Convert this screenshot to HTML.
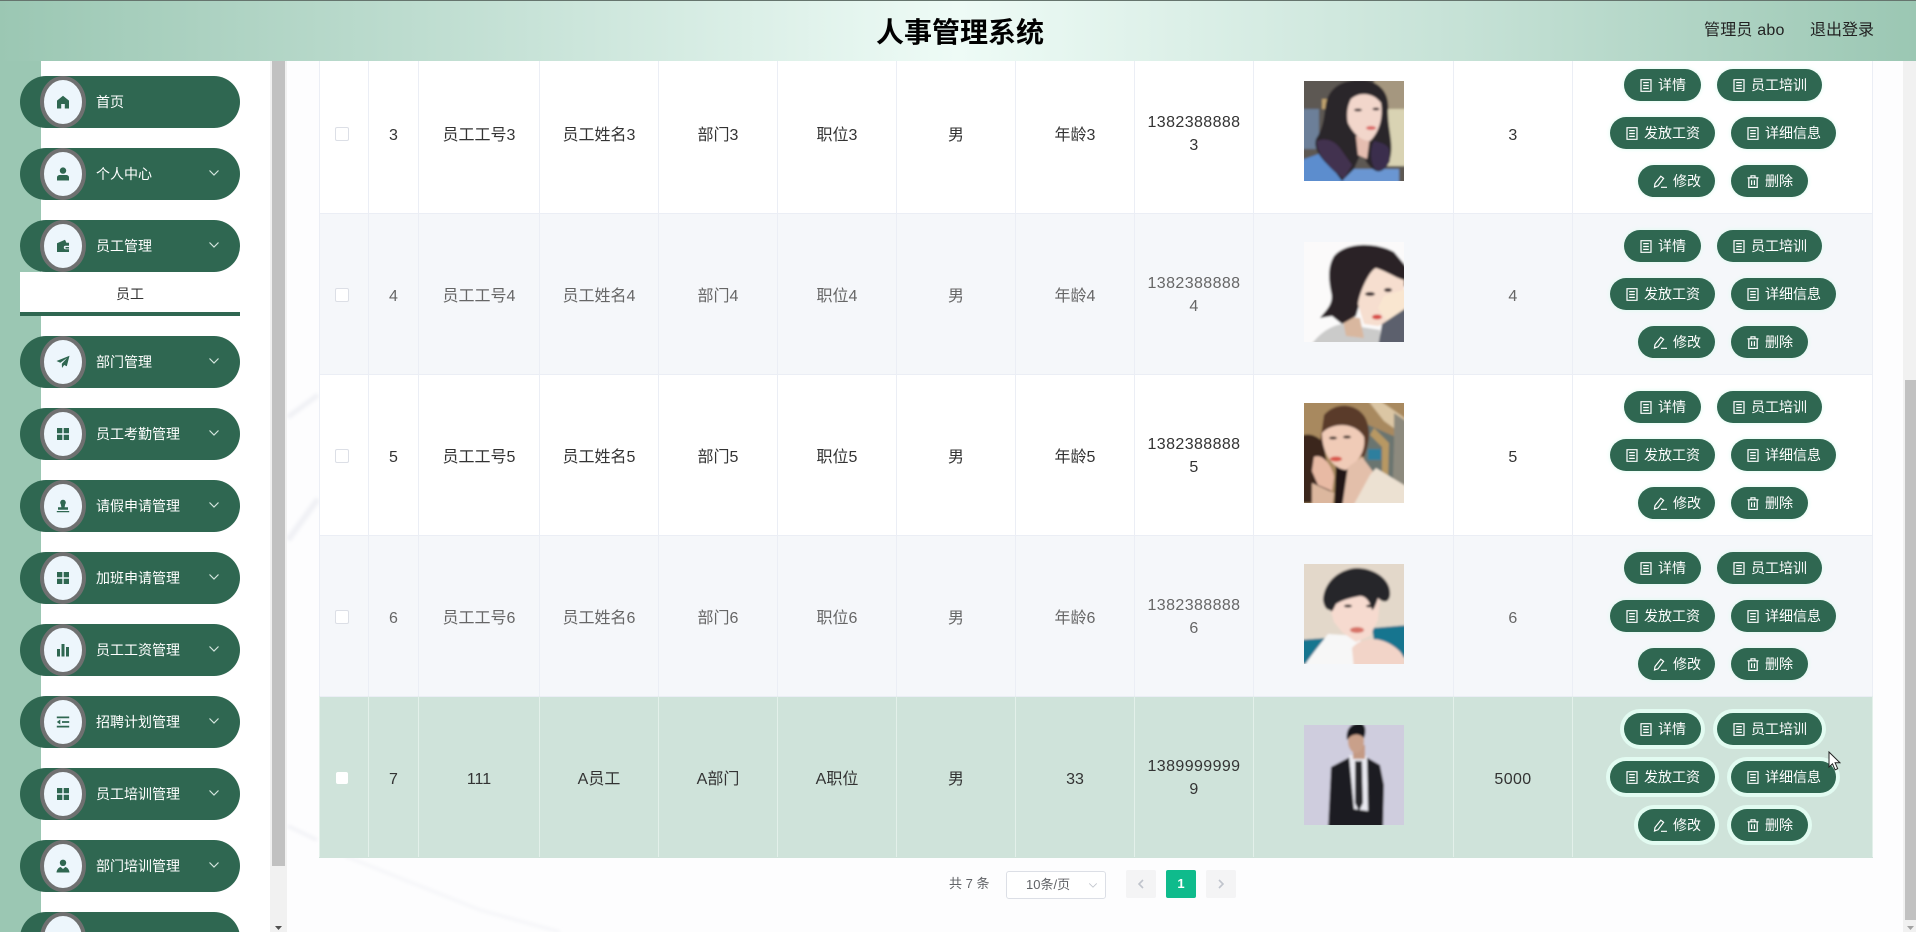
<!DOCTYPE html>
<html lang="zh-CN">
<head>
<meta charset="utf-8">
<title>人事管理系统</title>
<style>
*{box-sizing:border-box;margin:0;padding:0}
html,body{width:1916px;height:932px;overflow:hidden;background:#fff}
body{position:relative;font-family:"Liberation Sans","Noto Sans CJK SC",sans-serif;color:#333}
.abs{position:absolute}
#hdr{left:0;top:0;width:1916px;height:61px;z-index:5;background:linear-gradient(90deg,#9bc7b3 0,#c3e0d4 25%,#eefbf6 50%,#c3e0d4 78%,#9bc7b3 100%);border-top:1px solid #66756e}
#hdr .t{position:absolute;left:0;top:0;width:1920px;text-align:center;font-size:28px;font-weight:700;line-height:64px;color:#000}
#hdr span{position:absolute;top:19px;font-size:16px;line-height:22px;color:#222}
#strip{left:0;top:61px;width:41px;height:871px;background:#9bc7b3}
#side{left:41px;top:61px;width:229px;height:871px;background:#fff}
.sb-track{background:#f1f1f1}
.sb-thumb{background:#c1c1c1}
.m{position:absolute;left:20px;width:220px;height:52px;border-radius:26px;background:#2f6751;color:#fff;font-size:14px;line-height:52px;padding-left:76px;z-index:2}
.m .c{position:absolute;left:20px;top:0;width:46px;height:52px;border-radius:50%;border:4px solid #6f7070;background:#edf6fc}
.m .c svg{position:absolute;left:12px;top:15px;width:14px;height:14px;fill:#2f6751}
.m .a{position:absolute;left:188px;top:21px;width:12px;height:8px;fill:none;stroke:#d5e6de;stroke-width:1.2}
#sub{left:20px;top:272px;width:220px;height:44px;background:#fff;border-bottom:4px solid #2f6751;text-align:center;font-size:14px;line-height:44px;color:#333;z-index:2}
#main{left:287px;top:61px;width:1616px;height:871px;background:#fdfdfe}
.row{position:absolute;left:319px;width:1554px;height:161px;border-bottom:1px solid #ebeef5;font-size:16px}
.row>*{margin-top:-1px}
.row.w{background:#fff;color:#333}
.row.g{background:#f5f7fa;color:#666}
.row.h{background:#cfe3da;color:#333;border-bottom-color:#cfe3da}
.cell{position:absolute;top:0;height:161px;border-right:1px solid #ebeef5;text-align:center;line-height:168px;overflow:hidden}
.row.h .cell{border-right-color:#e3f0ea}
.c0{left:0;width:50px;border-left:1px solid #ebeef5}
.c1{left:50px;width:50px}
.c2{left:100px;width:121px}
.c3{left:221px;width:119px}
.c4{left:340px;width:119px}
.c5{left:459px;width:119px}
.c6{left:578px;width:119px}
.c7{left:697px;width:119px}
.c8{left:816px;width:119px;line-height:23px;padding:59px 0 0;letter-spacing:.4px}
.c9{left:935px;width:200px}
.c10{left:1135px;width:119px;letter-spacing:.4px}
.c11{left:1254px;width:300px}
.row.h .c0{border-left-color:#e3f0ea}
.ck{position:absolute;left:15px;top:75px;width:14px;height:14px;background:#fff;border:1px solid #dcdfe6;border-radius:2px}
.row.h .ck{left:16px;top:76px;width:12px;height:12px;border-color:#fff}
.row svg.pic{position:absolute;left:985px;top:29px;width:100px;height:100px;display:block}
.b{position:absolute;height:32px;border-radius:16px;background:#2f6751;color:#fff;font-size:14px;line-height:32px;box-shadow:0 0 5px #dcfbef;white-space:nowrap;z-index:1}
.row.h .b{box-shadow:0 0 0 4px #e2fbf1}
.b svg{position:absolute;left:16px;top:10px;width:12px;height:13px;fill:none;stroke:#fff;stroke-width:1.2}
.b i{position:absolute;left:34px;top:0;font-style:normal}
.b1{left:1305px;top:17px;width:77px}
.b2{left:1398px;top:17px;width:105px}
.b3{left:1291px;top:65px;width:105px}
.b4{left:1412px;top:65px;width:105px}
.b5{left:1319px;top:113px;width:77px}
.b6{left:1412px;top:113px;width:77px}
.b5 svg{left:15px}
.b5 i{left:35px}
.pg{font-size:13px;color:#606266}
.pb{position:absolute;top:870px;width:30px;height:28px;background:#f4f4f5;border-radius:2px;z-index:2}
.pb svg{position:absolute;left:11px;top:9px;width:8px;height:10px;fill:none;stroke:#c0c4cc;stroke-width:1.6}
</style>
</head>
<body>
<svg width="0" height="0" style="position:absolute">
<defs>
<symbol id="doc" viewBox="0 0 12 13"><path d="M1 .7h10v11.6H1zM3.2 3.6h5.6M3.2 6.5h5.6M3.2 9.4h5.6"/></symbol>
<symbol id="pen" viewBox="0 0 15 13"><path d="M1.5 12 2 8.5 7.8 1.2 10.6 3.4 5 10.8zM8 12.3h6"/></symbol>
<symbol id="trash" viewBox="0 0 12 13"><path d="M.5 2.8h11M4 2.6V.8h4v1.8M1.8 2.8v9.6h8.4V2.8M4.6 5.2v4.8M7.4 5.2v4.8"/></symbol>
<symbol id="chev" viewBox="0 0 12 8"><path d="M1.5 1.5 6 6l4.5-4.5"/></symbol>
<symbol id="home" viewBox="0 0 14 14"><path d="M7 .8 1 5.6V13.5h4.2V9h3.6v4.5H13V5.6z"/></symbol>
<symbol id="user" viewBox="0 0 14 14"><circle cx="7" cy="3.6" r="3.2"/><path d="M1 13.5v-3C1 8.8 2.4 8 4 8h6c1.6 0 3 .8 3 2.500v3z"/></symbol>
<symbol id="wallet" viewBox="0 0 14 14"><path d="M1 4.200 9 .8l1.400 3H13v3H9.500a1.600 1.600 0 0 0 0 3.400H13v2.800H1z"/><rect x="9.500" y="8" width="3.500" height="1.500"/></symbol>
<symbol id="plane" viewBox="0 0 14 14"><path d="M13.500.8.500 6l3.800 1.800L11 3 5.800 8.800 6 13l2.200-3 2.600 1.300z"/></symbol>
<symbol id="grid" viewBox="0 0 14 14"><path d="M1 1h5.300v5.300H1zM7.700 1H13v5.300H7.700zM1 7.700h5.300V13H1zM7.700 7.700H13V13H7.700z"/></symbol>
<symbol id="stamp" viewBox="0 0 14 14"><path d="M7 .8a2.800 2.800 0 0 1 2.200 4.500L8.600 8.200H12v2.600H2V8.200h3.400l-.6-2.900A2.800 2.800 0 0 1 7 .8zM.8 12h12.400v1.300H.8z"/></symbol>
<symbol id="chart" viewBox="0 0 14 14"><path d="M1 6h3v7.500H1zM5.500 1h3v12.500h-3zM10 4h3v9.500h-3z"/></symbol>
<symbol id="outd" viewBox="0 0 14 14"><path d="M.8 1.500h12.400v1.800H.8zM6 6.100h7.200v1.800H6zM.8 10.700h12.400v1.800H.8zM4.300 4.500v5L.8 7z"/></symbol>
<symbol id="userp" viewBox="0 0 14 14"><circle cx="7" cy="3.800" r="3.200"/><path d="M.5 13.500c.3-3 2-5 4.200-5.500L7 10l2.300-2c2.200.5 3.900 2.500 4.200 5.500z"/></symbol>
<filter id="bl" x="-5%" y="-5%" width="110%" height="110%"><feGaussianBlur stdDeviation="1.100"/></filter>
<filter id="bl8" x="-20%" y="-50%" width="140%" height="200%"><feGaussianBlur stdDeviation="1.800"/></filter>
<clipPath id="pc"><rect width="100" height="100"/></clipPath>
</defs>
</svg>

<div id="hdr" class="abs">
  <div class="t">人事管理系统</div>
  <span style="left:1704px;letter-spacing:.2px">管理员 abo</span>
  <span style="left:1810px">退出登录</span>
</div>

<div id="strip" class="abs"></div>
<div id="side" class="abs"></div>
<div class="abs sb-track" style="left:270px;top:61px;width:17px;height:871px"></div>
<div class="abs sb-thumb" style="left:272px;top:61px;width:13px;height:805px"></div>
<svg class="abs" style="left:275px;top:926px" width="7" height="4"><path d="M0 0h7L3.500 4z" fill="#505050"/></svg>

<div id="main" class="abs">
  <svg width="1616" height="871" style="position:absolute;left:0;top:0">
    <g filter="url(#bl8)" fill="none" stroke="#f0f1f5">
      <path d="M1 356 31 334" stroke-width="5"/>
      <path d="M1 479 31 438" stroke-width="6"/>
      <path d="M1 765 30 779" stroke-width="3"/>
      <path d="M58 795 193 849 273 871" stroke-width="3" stroke="#f4f5f8"/>
    </g>
  </svg>
</div>

<div class="m" style="top:76px"><span class="c"><svg><use href="#home"/></svg></span>首页</div>
<div class="m" style="top:148px"><span class="c"><svg><use href="#user"/></svg></span>个人中心<svg class="a"><use href="#chev"/></svg></div>
<div class="m" style="top:220px"><span class="c"><svg><use href="#wallet"/></svg></span>员工管理<svg class="a"><use href="#chev"/></svg></div>
<div id="sub" class="abs">员工</div>
<div class="m" style="top:336px"><span class="c"><svg><use href="#plane"/></svg></span>部门管理<svg class="a"><use href="#chev"/></svg></div>
<div class="m" style="top:408px"><span class="c"><svg><use href="#grid"/></svg></span>员工考勤管理<svg class="a"><use href="#chev"/></svg></div>
<div class="m" style="top:480px"><span class="c"><svg><use href="#stamp"/></svg></span>请假申请管理<svg class="a"><use href="#chev"/></svg></div>
<div class="m" style="top:552px"><span class="c"><svg><use href="#grid"/></svg></span>加班申请管理<svg class="a"><use href="#chev"/></svg></div>
<div class="m" style="top:624px"><span class="c"><svg><use href="#chart"/></svg></span>员工工资管理<svg class="a"><use href="#chev"/></svg></div>
<div class="m" style="top:696px"><span class="c"><svg><use href="#outd"/></svg></span>招聘计划管理<svg class="a"><use href="#chev"/></svg></div>
<div class="m" style="top:768px"><span class="c"><svg><use href="#grid"/></svg></span>员工培训管理<svg class="a"><use href="#chev"/></svg></div>
<div class="m" style="top:840px"><span class="c"><svg><use href="#userp"/></svg></span>部门培训管理<svg class="a"><use href="#chev"/></svg></div>
<div class="m" style="top:912px"><span class="c"></span></div>

<!-- Row 3 -->
<div class="row w" style="top:53px">
  <div class="cell c0"><span class="ck"></span></div><div class="cell c1">3</div><div class="cell c2">员工工号3</div><div class="cell c3">员工姓名3</div><div class="cell c4">部门3</div><div class="cell c5">职位3</div><div class="cell c6">男</div><div class="cell c7">年龄3</div><div class="cell c8">1382388888<br>3</div><div class="cell c9"></div><div class="cell c10">3</div><div class="cell c11"></div>
  <svg class="pic" viewBox="0 0 100 100"><g clip-path="url(#pc)"><g filter="url(#bl)">
    <rect x="-5" y="-5" width="110" height="110" fill="#5d5853"/>
    <path d="M70-5H105V40H70z" fill="#a5977f"/>
    <path d="M78 28H105V85H80z" fill="#d9d3b3"/>
    <rect x="-5" y="28" width="20" height="40" fill="#6c7f99"/>
    <rect x="18" y="18" width="8" height="10" fill="#c0a26e"/>
    <path d="M-5 80 20 71 45 100 35 105H-5z" fill="#5b8dce"/>
    <path d="M40 88H95V105H40z" fill="#6a96d2"/>
    <path d="M22 22C26 4 42-2 60-1 76 1 86 12 84 30 84 50 90 62 86 78 84 86 78 92 72 90 64 86 60 78 58 70L50 88 38 100 32 92C22 82 8 70 12 58 20 46 20 34 22 22z" fill="#2c2529"/>
    <path d="M13 60C22 56 32 60 38 70L48 84 40 98 33 92C24 84 12 72 13 60z" fill="#43304f"/>
    <path d="M70 60C76 62 82 62 85 68L86 80C82 88 76 92 71 88 66 80 66 68 70 60z" fill="#3a2d4e"/>
    <path d="M52 55H66L63 78 54 74z" fill="#e5bdb0"/>
    <path d="M47 18C56 10 70 12 77 22 79 36 76 50 66 60 58 60 50 54 44 42 42 32 44 24 47 18z" fill="#f2d6cb"/>
    <ellipse cx="54" cy="29" rx="4" ry="1.500" fill="#4a3a3a"/><ellipse cx="72" cy="28" rx="3.500" ry="1.500" fill="#4a3a3a"/>
    <ellipse cx="67" cy="47" rx="5" ry="2" fill="#dc6a68"/>
  </g></g></svg>
  <a class="b b1"><svg><use href="#doc"/></svg><i>详情</i></a><a class="b b2"><svg><use href="#doc"/></svg><i>员工培训</i></a><a class="b b3"><svg><use href="#doc"/></svg><i>发放工资</i></a><a class="b b4"><svg><use href="#doc"/></svg><i>详细信息</i></a><a class="b b5"><svg style="width:15px"><use href="#pen"/></svg><i>修改</i></a><a class="b b6"><svg><use href="#trash"/></svg><i>删除</i></a>
</div>

<!-- Row 4 -->
<div class="row g" style="top:214px">
  <div class="cell c0"><span class="ck"></span></div><div class="cell c1">4</div><div class="cell c2">员工工号4</div><div class="cell c3">员工姓名4</div><div class="cell c4">部门4</div><div class="cell c5">职位4</div><div class="cell c6">男</div><div class="cell c7">年龄4</div><div class="cell c8">1382388888<br>4</div><div class="cell c9"></div><div class="cell c10">4</div><div class="cell c11"></div>
  <svg class="pic" viewBox="0 0 100 100"><g clip-path="url(#pc)"><g filter="url(#bl)">
    <rect x="-5" y="-5" width="110" height="110" fill="#fbfafa"/>
    <path d="M6 105C14 92 26 84 38 82L76 88V105z" fill="#cbcbca"/>
    <path d="M38 74 56 76 60 96 42 94z" fill="#d9b79f"/>
    <path d="M30 14C42 0 72 0 90 10L105 28V44L78 46 56 60 52 74 38 82 28 74 16 76C22 68 30 62 27 50 24 36 24 24 30 14z" fill="#2b2225"/>
    <path d="M54 62C56 48 66 28 72 26 84 30 92 36 100 38V56L88 78 74 84 60 82z" fill="#f6decf"/>
    <ellipse cx="66" cy="52" rx="5" ry="2" fill="#3a2f30"/><ellipse cx="84" cy="48" rx="4" ry="2" fill="#3a2f30"/>
    <path d="M80 54 105 46V70L84 80 74 66z" fill="#f9e6d0"/>
    <path d="M105 64 78 82 74 105H105z" fill="#5c616d"/>
    <ellipse cx="73" cy="75" rx="5" ry="2.500" fill="#d84c46"/>
  </g></g></svg>
  <a class="b b1"><svg><use href="#doc"/></svg><i>详情</i></a><a class="b b2"><svg><use href="#doc"/></svg><i>员工培训</i></a><a class="b b3"><svg><use href="#doc"/></svg><i>发放工资</i></a><a class="b b4"><svg><use href="#doc"/></svg><i>详细信息</i></a><a class="b b5"><svg style="width:15px"><use href="#pen"/></svg><i>修改</i></a><a class="b b6"><svg><use href="#trash"/></svg><i>删除</i></a>
</div>

<!-- Row 5 -->
<div class="row w" style="top:375px">
  <div class="cell c0"><span class="ck"></span></div><div class="cell c1">5</div><div class="cell c2">员工工号5</div><div class="cell c3">员工姓名5</div><div class="cell c4">部门5</div><div class="cell c5">职位5</div><div class="cell c6">男</div><div class="cell c7">年龄5</div><div class="cell c8">1382388888<br>5</div><div class="cell c9"></div><div class="cell c10">5</div><div class="cell c11"></div>
  <svg class="pic" viewBox="0 0 100 100"><g clip-path="url(#pc)"><g filter="url(#bl)">
    <rect x="-5" y="-5" width="110" height="110" fill="#a8895f"/>
    <path d="M60 20 105 40V80H60z" fill="#6a7470"/>
    <path d="M72-5 105 18V36L80 18 62-5z" fill="#dbc6a4"/>
    <path d="M90 10 105 20V105H88L90 40z" fill="#8d8a7e"/>
    <rect x="64" y="46" width="13" height="11" fill="#2f7f9e"/>
    <path d="M70 25 85 40 84 80 78 80 78 44 66 32z" fill="#b89863"/>
    <path d="M20 12C32-2 54 0 62 16 68 30 64 44 60 54L36 50 16 40z" fill="#5a3b2b"/>
    <path d="M-5 34C6 28 14 34 20 40L28 100H-5z" fill="#3a251f"/>
    <path d="M32 60 52 66 44 105 30 105z" fill="#241815"/>
    <path d="M18 30C30 18 52 20 60 34 62 48 54 60 42 67 30 66 18 52 18 30z" fill="#f0cbb7"/>
    <path d="M10 54C18 50 28 62 30 74L28 88 14 82 8 68z" fill="#e8baa4"/>
    <path d="M44 64 58 54 70 70 48 105 38 105z" fill="#e3bfaa"/>
    <path d="M48 105 66 72 72 65 105 85V105z" fill="#ece1d2"/>
    <path d="M8 80 30 90 28 105H8z" fill="#dcb79e"/>
    <ellipse cx="29" cy="35" rx="4" ry="1.500" fill="#3a2a25"/><ellipse cx="43" cy="34" rx="4" ry="1.500" fill="#3a2a25"/>
    <ellipse cx="32" cy="56" rx="6" ry="2.500" fill="#d9564c"/>
  </g></g></svg>
  <a class="b b1"><svg><use href="#doc"/></svg><i>详情</i></a><a class="b b2"><svg><use href="#doc"/></svg><i>员工培训</i></a><a class="b b3"><svg><use href="#doc"/></svg><i>发放工资</i></a><a class="b b4"><svg><use href="#doc"/></svg><i>详细信息</i></a><a class="b b5"><svg style="width:15px"><use href="#pen"/></svg><i>修改</i></a><a class="b b6"><svg><use href="#trash"/></svg><i>删除</i></a>
</div>

<!-- Row 6 -->
<div class="row g" style="top:536px">
  <div class="cell c0"><span class="ck"></span></div><div class="cell c1">6</div><div class="cell c2">员工工号6</div><div class="cell c3">员工姓名6</div><div class="cell c4">部门6</div><div class="cell c5">职位6</div><div class="cell c6">男</div><div class="cell c7">年龄6</div><div class="cell c8">1382388888<br>6</div><div class="cell c9"></div><div class="cell c10">6</div><div class="cell c11"></div>
  <svg class="pic" viewBox="0 0 100 100"><g clip-path="url(#pc)"><g filter="url(#bl)">
    <rect x="-5" y="-5" width="110" height="110" fill="#e3d8ca"/>
    <path d="M-5 76 22 74 22 100H-5z" fill="#17748f"/>
    <path d="M68 64 105 61V94L72 90z" fill="#17748f"/>
    <path d="M0 102C8 90 18 78 24 70L56 72 60 105H0z" fill="#f7f7f7"/>
    <path d="M26 44C40 30 60 28 76 34L74 56 66 72 52 78 38 68 30 58z" fill="#f6dacf"/>
    <path d="M19 36C20 16 38 4 54 4 74 5 88 18 86 32 84 40 78 38 74 34 72 40 70 46 68 46 66 38 62 32 56 32 46 34 38 36 32 40 30 44 28 50 26 46 22 46 20 42 19 36z" fill="#25252c"/>
    <ellipse cx="44" cy="42" rx="4" ry="1.500" fill="#2e2a2a"/><ellipse cx="66" cy="42" rx="4" ry="1.500" fill="#2e2a2a"/>
    <ellipse cx="53" cy="66" rx="7" ry="3" fill="#d87367"/>
    <path d="M48 84C56 74 72 72 86 80 96 86 102 92 100 102L50 105z" fill="#f2d4c8"/>
  </g></g></svg>
  <a class="b b1"><svg><use href="#doc"/></svg><i>详情</i></a><a class="b b2"><svg><use href="#doc"/></svg><i>员工培训</i></a><a class="b b3"><svg><use href="#doc"/></svg><i>发放工资</i></a><a class="b b4"><svg><use href="#doc"/></svg><i>详细信息</i></a><a class="b b5"><svg style="width:15px"><use href="#pen"/></svg><i>修改</i></a><a class="b b6"><svg><use href="#trash"/></svg><i>删除</i></a>
</div>

<!-- Row 7 -->
<div class="row h" style="top:697px">
  <div class="cell c0"><span class="ck"></span></div><div class="cell c1">7</div><div class="cell c2">111</div><div class="cell c3">A员工</div><div class="cell c4">A部门</div><div class="cell c5">A职位</div><div class="cell c6">男</div><div class="cell c7">33</div><div class="cell c8">1389999999<br>9</div><div class="cell c9"></div><div class="cell c10">5000</div><div class="cell c11"></div>
  <svg class="pic" viewBox="0 0 100 100"><g clip-path="url(#pc)"><g filter="url(#bl)">
    <rect x="-5" y="-5" width="110" height="110" fill="#cfcdde"/>
    <path d="M24 105 27 42 46 32 52 38 62 32 76 40 80 60 79 105z" fill="#1d1c20"/>
    <path d="M45 30 63 31 64 86 50 84z" fill="#e9e9f0"/>
    <path d="M51 36H58L59 78 55 86 51 78z" fill="#26252a"/>
    <rect x="49" y="20" width="12" height="14" fill="#c49a84"/>
    <ellipse cx="52" cy="16" rx="8" ry="12" fill="#c9a08a"/>
    <path d="M43 15C41 3 49-3 57-2 63 0 62 9 60 13 55 8 48 8 43 15z" fill="#15151a"/>
  </g></g></svg>
  <a class="b b1"><svg><use href="#doc"/></svg><i>详情</i></a><a class="b b2"><svg><use href="#doc"/></svg><i>员工培训</i></a><a class="b b3"><svg><use href="#doc"/></svg><i>发放工资</i></a><a class="b b4"><svg><use href="#doc"/></svg><i>详细信息</i></a><a class="b b5"><svg style="width:15px"><use href="#pen"/></svg><i>修改</i></a><a class="b b6"><svg><use href="#trash"/></svg><i>删除</i></a>
</div>

<!-- Pagination -->
<div class="abs pg" style="left:949px;top:875px;line-height:18px;z-index:2">共 7 条</div>
<div class="abs pg" style="left:1006px;top:871px;width:100px;height:28px;border:1px solid #dcdfe6;border-radius:3px;line-height:26px;padding-left:19px;background:#fff;z-index:2">10条/页
  <svg style="position:absolute;left:81px;top:10px;fill:none;stroke:#c0c4cc;stroke-width:1" width="10" height="7" viewBox="0 0 12 8"><use href="#chev"/></svg>
</div>
<div class="pb" style="left:1126px"><svg viewBox="0 0 8 10"><path d="M6 1 2 5l4 4"/></svg></div>
<div class="pb" style="left:1166px;background:#0fbb8c;color:#fff;font-size:13px;font-weight:700;text-align:center;line-height:28px">1</div>
<div class="pb" style="left:1206px"><svg viewBox="0 0 8 10"><path d="M2 1l4 4-4 4"/></svg></div>

<!-- Right scrollbar -->
<div class="abs sb-track" style="left:1903px;top:61px;width:13px;height:871px;z-index:1"></div>
<div class="abs sb-thumb" style="left:1905px;top:380px;width:11px;height:540px;z-index:2"></div>
<svg class="abs" style="left:1907px;top:926px;z-index:2" width="7" height="4"><path d="M0 0h7L3.500 4z" fill="#a3a3a3"/></svg>

<!-- Cursor -->
<svg class="abs" style="left:1828px;top:751px;z-index:9" width="13" height="20" viewBox="0 0 13 20"><path d="M1 1v15l3.500-3.200 2.600 6 2.600-1.100-2.600-5.900H12z" fill="#fff" stroke="#222" stroke-width="1"/></svg>
</body>
</html>
